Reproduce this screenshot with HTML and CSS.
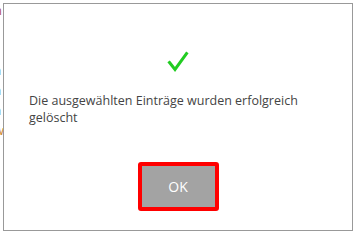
FILE: index.html
```html
<!DOCTYPE html>
<html>
<head>
<meta charset="utf-8">
<link rel="stylesheet" href="styles.css">
</head>
<body>
<div class="page">
  <p class="bg-line l1">n</p>
  <p class="bg-line l2">l</p>
  <p class="bg-line l3">l</p>
  <p class="bg-line l4">a</p>
  <p class="bg-line l4">a</p>
  <p class="bg-line l4">a</p>
  <p class="bg-line l5">w</p>
</div>
<div class="dialog">
  <div class="icon">
    <svg width="22" height="22" viewBox="0 0 22 22"><path d="M2.5 11.5 L8 18.5 L19.5 2.5" fill="none" stroke="#22cc22" stroke-width="3" stroke-linecap="square" stroke-linejoin="miter"/></svg>
  </div>
  <p class="message">Die ausgewählten Einträge wurden erfolgreich gelöscht</p>
  <div class="actions">
    <button class="ok">OK</button>
  </div>
</div>
</body>
</html>
```
FILE: styles.css
```css
html, body { margin: 0; padding: 0; background: #fff; }
body { width: 356px; height: 234px; overflow: hidden; position: relative; font-family: "Open Sans", "Noto Sans", sans-serif; }
.page { padding-top: 4px; margin-left: -6px; }
.bg-line { margin: 0 0 8px 0; font-size: 13px; line-height: 12px; color: #7a5a8a; }
.l1 { color: #b05060; }
.l2 { color: #8a5a9a; margin-top: 8px; }
.l3 { color: #b05060; margin-top: 4px; }
.l4 { color: #556677; }
.l5 { color: #cc8833; }
.dialog {
  position: absolute; left: 3px; top: 3px;
  width: 348px; height: 226px;
  border: 1px solid #999;
  background: #fff;
  display: flex; flex-direction: column;
}
.icon { display: flex; justify-content: center; padding-top: 47px; height: 22px; }
.message {
  margin: 19px 0 0 25px; width: 290px;
  font-size: 12.5px; line-height: 17px; color: #444;
}
.actions { display: flex; justify-content: center; margin-top: 36px; }
.ok {
  width: 81px; height: 49px;
  background: #a3a3a3; border: 4px solid #ff0000; border-radius: 3px;
  color: #fff; font-family: "Open Sans", "Noto Sans", sans-serif; font-size: 14px;
  padding: 0;
}
```
